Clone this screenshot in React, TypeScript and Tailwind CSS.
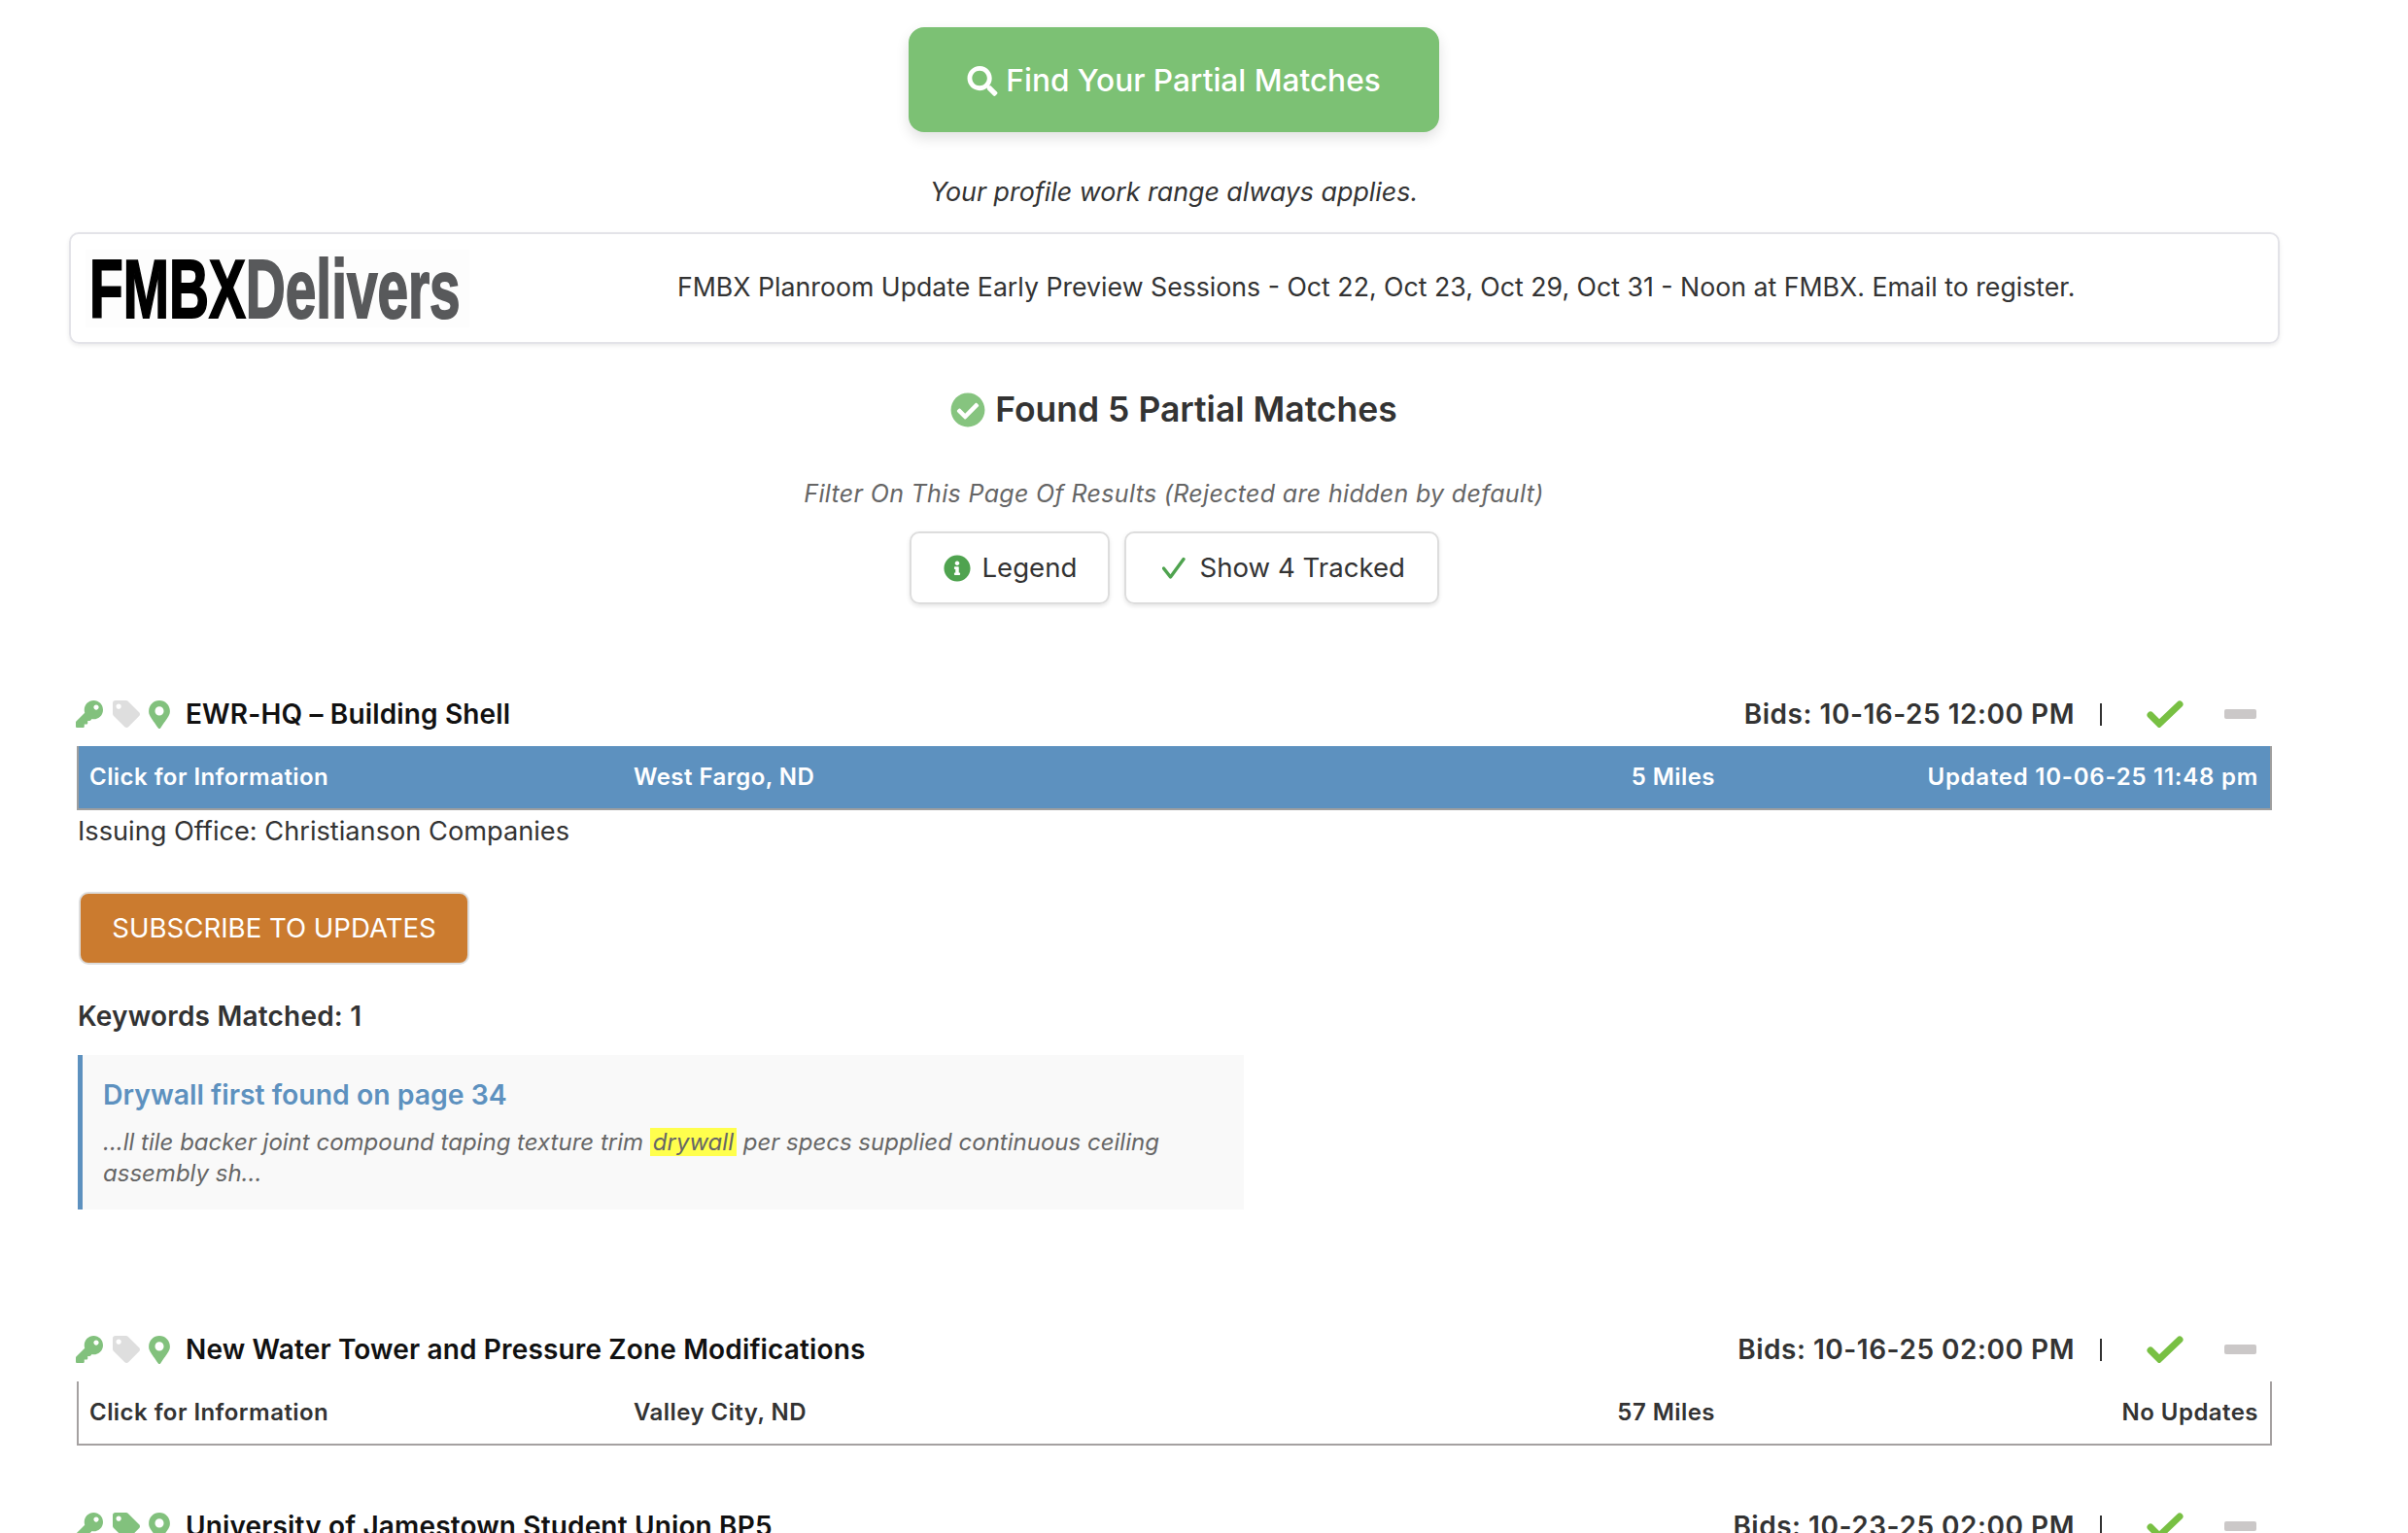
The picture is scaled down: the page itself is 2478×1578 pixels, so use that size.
import { FaKey, FaTag, FaMapMarkerAlt, FaSearch, FaCheckCircle, FaInfoCircle } from "react-icons/fa";

function Row({ title, bids, tagOn, location, miles, updated, active }: { title: string; bids: string; tagOn?: boolean; location: string; miles: string; updated: string; active?: boolean }) {
  return (
    <div>
      <div className="flex h-[66px] items-center pl-[78px] pr-[94px]">
        <FaKey className="h-[28px] w-[28px] text-[#82c17d]" />
        <FaTag className={`ml-[10px] h-[28px] w-[28px] ${tagOn ? "text-[#82c17d]" : "text-[#dedede]"}`} />
        <FaMapMarkerAlt className="ml-[9px] h-[29px] w-[22px] text-[#82c17d]" />
        <div className="ml-[16px] text-[28px] font-semibold tracking-[0.15px] text-[#111111]">{title}</div>
        <div className="ml-auto text-[28px] font-semibold tracking-[0.52px] text-[#333333]">{bids}</div>
        <div className="ml-[26px] h-[23px] w-[2px] bg-[#333333]" />
        <svg className="ml-[46px] h-[28px] w-[38px]" viewBox="0 0 38 28" fill="none">
          <path d="M4 15L13 24L34 4" stroke="#78c043" strokeWidth="7" strokeLinejoin="miter" strokeLinecap="round" />
        </svg>
        <div className="ml-[42px] h-[10px] w-[33px] rounded-[2px] bg-[#cbc8c8]" />
      </div>
      <div className={`mx-[79px] grid h-[66px] w-[2259px] grid-cols-[560px_1fr_auto_559px] items-center border-2 border-t-0 pl-[11px] pr-[12px] text-[24px] font-semibold tracking-[0.45px] ${active ? "border-[#9e9e9e] bg-[#5d91bf] text-white" : "border-[#a5a1a1] text-[#333333]"}`}>
        <div>Click for Information</div>
        <div>{location}</div>
        <div>{miles}</div>
        <div className={`text-right ${active ? "tracking-[0.75px]" : ""}`}>{updated}</div>
      </div>
    </div>
  );
}

export default function App() {
  return (
    <div className="h-[1578px] overflow-hidden bg-white text-[#333333] [font-family:Inter,'Noto_Sans',sans-serif]">
      <div className="w-[2416px]">
        <div className="flex flex-col items-center pt-[28px]">
          <div className="flex h-[108px] w-[546px] items-center justify-center gap-[8px] rounded-[16px] bg-[#7cc174] pt-[2px] text-[31.6px] font-medium text-white shadow-[0_6px_14px_rgba(0,0,0,0.12)]">
            <FaSearch className="h-[31px] w-[32px]" />
            <span>Find Your Partial Matches</span>
          </div>
          <div className="mt-[43px] text-[26.8px] italic leading-[36px]">Your profile work range always applies.</div>
        </div>
        <div className="mx-[71px] mt-[24px] flex h-[115px] w-[2275px] items-center rounded-[10px] border-2 border-[#e3e3e8] shadow-[0_2px_4px_rgba(0,0,0,0.08)]">
          <div className="ml-[15px] flex h-[80px] w-[395px] shrink-0 items-center overflow-hidden bg-[#fdfdfd]">
            <div className="ml-[4px] origin-left scale-x-[0.66] whitespace-nowrap text-[86px] font-bold leading-[80px] [font-family:'Liberation_Sans',sans-serif] [-webkit-text-stroke:2px_currentColor]">
              <span className="text-black">FMBX</span><span className="text-[#58595b]">Delivers</span>
            </div>
          </div>
          <div className="ml-[214px] whitespace-nowrap pb-[2px] text-[26.7px] text-[#333333]">FMBX Planroom Update Early Preview Sessions - Oct 22, Oct 23, Oct 29, Oct 31 - Noon at FMBX. Email to register.</div>
        </div>
        <div className="mt-[46px] flex items-center justify-center gap-[10px] text-[35.5px] font-semibold leading-[44px]">
          <FaCheckCircle className="h-[36px] w-[36px] text-[#86c47f]" />
          <span>Found 5 Partial Matches</span>
        </div>
        <div className="mt-[46px] text-center text-[25px] italic leading-[36px] tracking-[0.33px] text-[#666666]">Filter On This Page Of Results (Rejected are hidden by default)</div>
        <div className="mt-[21px] flex justify-center gap-[15px] text-[27.6px]">
          <div className="flex h-[75px] w-[206px] items-center gap-[12px] rounded-[10px] border-2 border-[#dddddd] pl-[33px] shadow-[0_2px_4px_rgba(0,0,0,0.1)]">
            <FaInfoCircle className="h-[28px] w-[28px] text-[#4fa34f]" />
            <span>Legend</span>
          </div>
          <div className="flex h-[75px] w-[324px] items-center gap-[15px] rounded-[10px] border-2 border-[#dddddd] pl-[37px] shadow-[0_2px_4px_rgba(0,0,0,0.1)]">
            <svg className="h-[24px] w-[24px]" viewBox="0 0 24 24" fill="none">
              <path d="M1.5 12L8.5 21L22 2.5" stroke="#4fa34f" strokeWidth="3.4" strokeLinejoin="round" strokeLinecap="round" />
            </svg>
            <span>Show 4 Tracked</span>
          </div>
        </div>
        <div className="mt-[80px]">
          <Row title="EWR-HQ – Building Shell" bids="Bids: 10-16-25 12:00 PM" location="West Fargo, ND" miles="5 Miles" updated="Updated 10-06-25 11:48 pm" active />
        </div>
        <div className="ml-[80px] mt-[4px] text-[27.2px] leading-[36px]">Issuing Office: Christianson Companies</div>
        <div className="ml-[81px] mt-[44px] flex h-[75px] w-[402px] items-center justify-center rounded-[10px] border-2 border-[#dddddd] bg-[#cb7b2f] text-[27.6px] text-white">SUBSCRIBE TO UPDATES</div>
        <div className="ml-[80px] mt-[35px] text-[28px] font-semibold leading-[36px] tracking-[0.2px]">Keywords Matched: 1</div>
        <div className="ml-[80px] mt-[22px] h-[159px] w-[1200px] border-l-[5px] border-[#5d91bf] bg-[#f9f9f9] pl-[21px] pr-[60px] pt-[23px]">
          <div className="text-[28.4px] font-semibold leading-[36px] text-[#5d91bf]">Drywall first found on page 34</div>
          <div className="mt-[15px] text-[24px] italic leading-[32px] text-[#666666]">
            ...ll tile backer joint compound taping texture trim <span className="bg-[#ffff4d] px-[3px]">drywall</span> per specs supplied continuous ceiling assembly sh...
          </div>
        </div>
        <div className="mt-[111px]">
          <Row title="New Water Tower and Pressure Zone Modifications" bids="Bids: 10-16-25 02:00 PM" location="Valley City, ND" miles="57 Miles" updated="No Updates" />
        </div>
        <div className="mt-[50px]">
          <Row title="University of Jamestown Student Union BP5" bids="Bids: 10-23-25 02:00 PM" tagOn location="" miles="" updated="" />
        </div>
      </div>
    </div>
  );
}
